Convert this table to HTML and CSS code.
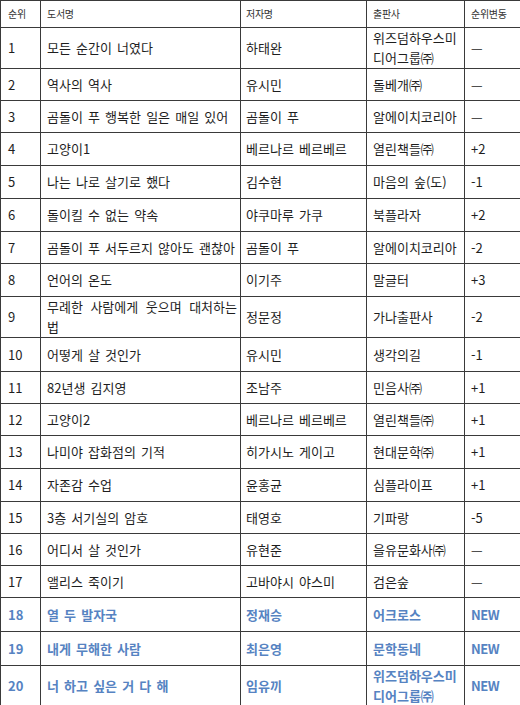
FILE: index.html
```html
<!DOCTYPE html>
<html lang="ko">
<head>
<meta charset="utf-8">
<title>베스트셀러 순위</title>
<link rel="stylesheet" href="styles.css">
</head>
<body>
<table class="rank-table">
  <colgroup>
    <col class="c-rank"><col class="c-title"><col class="c-author"><col class="c-pub"><col class="c-change">
  </colgroup>
  <thead>
    <tr class="h27"><th>순위</th><th>도서명</th><th>저자명</th><th>출판사</th><th>순위변동</th></tr>
  </thead>
  <tbody>
    <tr class="h41"><td>1</td><td>모든 순간이 너였다</td><td>하태완</td><td class="two">위즈덤하우스미<br>디어그룹㈜</td><td>—</td></tr>
    <tr class="h32"><td>2</td><td>역사의 역사</td><td>유시민</td><td>돌베개㈜</td><td>—</td></tr>
    <tr class="h32"><td>3</td><td>곰돌이 푸 행복한 일은 매일 있어</td><td>곰돌이 푸</td><td>알에이치코리아</td><td>—</td></tr>
    <tr class="h33"><td>4</td><td>고양이1</td><td>베르나르 베르베르</td><td>열린책들㈜</td><td>+2</td></tr>
    <tr class="h33"><td>5</td><td>나는 나로 살기로 했다</td><td>김수현</td><td>마음의 숲(도)</td><td>-1</td></tr>
    <tr class="h33"><td>6</td><td>돌이킬 수 없는 약속</td><td>야쿠마루 가쿠</td><td>북플라자</td><td>+2</td></tr>
    <tr class="h32"><td>7</td><td>곰돌이 푸 서두르지 않아도 괜찮아</td><td>곰돌이 푸</td><td>알에이치코리아</td><td>-2</td></tr>
    <tr class="h33"><td>8</td><td>언어의 온도</td><td>이기주</td><td>말글터</td><td>+3</td></tr>
    <tr class="h41"><td>9</td><td class="two"><span class="just">무례한 사람에게 웃으며 대처하는</span>법</td><td>정문정</td><td>가나출판사</td><td>-2</td></tr>
    <tr class="h34"><td>10</td><td>어떻게 살 것인가</td><td>유시민</td><td>생각의길</td><td>-1</td></tr>
    <tr class="h32"><td>11</td><td>82년생 김지영</td><td>조남주</td><td>민음사㈜</td><td>+1</td></tr>
    <tr class="h32"><td>12</td><td>고양이2</td><td>베르나르 베르베르</td><td>열린책들㈜</td><td>+1</td></tr>
    <tr class="h33"><td>13</td><td>나미야 잡화점의 기적</td><td>히가시노 게이고</td><td>현대문학㈜</td><td>+1</td></tr>
    <tr class="h33"><td>14</td><td>자존감 수업</td><td>윤홍균</td><td>심플라이프</td><td>+1</td></tr>
    <tr class="h32"><td>15</td><td>3층 서기실의 암호</td><td>태영호</td><td>기파랑</td><td>-5</td></tr>
    <tr class="h32"><td>16</td><td>어디서 살 것인가</td><td>유현준</td><td>을유문화사㈜</td><td>—</td></tr>
    <tr class="h32"><td>17</td><td>앨리스 죽이기</td><td>고바야시 야스미</td><td>검은숲</td><td>—</td></tr>
    <tr class="h34 new"><td>18</td><td>열 두 발자국</td><td>정재승</td><td>어크로스</td><td>NEW</td></tr>
    <tr class="h34 new"><td>19</td><td>내게 무해한 사람</td><td>최은영</td><td>문학동네</td><td>NEW</td></tr>
    <tr class="h39 new"><td>20</td><td>너 하고 싶은 거 다 해</td><td>임유끼</td><td class="two">위즈덤하우스미<br>디어그룹㈜</td><td>NEW</td></tr>
  </tbody>
</table>
</body>
</html>
```

FILE: styles.css
```css
html, body {
  margin: 0;
  padding: 0;
  background: #ffffff;
}

.rank-table {
  border-collapse: collapse;
  table-layout: fixed;
  width: 520px;
  font-family: "Noto Sans CJK KR", "Noto Sans", sans-serif;
  font-size: 13px;
  word-spacing: 1.5px;
  color: #1e1e1e;
}

.c-rank { width: 40px; }
.c-title { width: 200px; }
.c-author { width: 126px; }
.c-pub { width: 98px; }
.c-change { width: 56px; }

.rank-table th,
.rank-table td {
  border: 1px solid #3a3a3a;
  padding: 0 1px 0 6px;
  text-align: left;
  vertical-align: middle;
  line-height: 20px;
  white-space: nowrap;
  overflow: hidden;
}

.rank-table th {
  font-weight: normal;
  font-size: 10px;
  word-spacing: 0;
  letter-spacing: -0.3px;
  color: #333333;
}

.rank-table tr > :first-child {
  padding-left: 7px;
}

.rank-table tr > :nth-child(3) {
  padding-left: 5px;
}

.just {
  display: block;
  text-align: justify;
  text-align-last: justify;
  width: 190px;
}

.h27 { height: 27px; }
.h32 { height: 32px; }
.h33 { height: 33px; }
.h34 { height: 34px; }
.h39 { height: 39px; }
.h41 { height: 41px; }

.new td {
  color: #5683c2;
  font-weight: bold;
}

.new td:last-child {
  letter-spacing: -0.5px;
}
```
